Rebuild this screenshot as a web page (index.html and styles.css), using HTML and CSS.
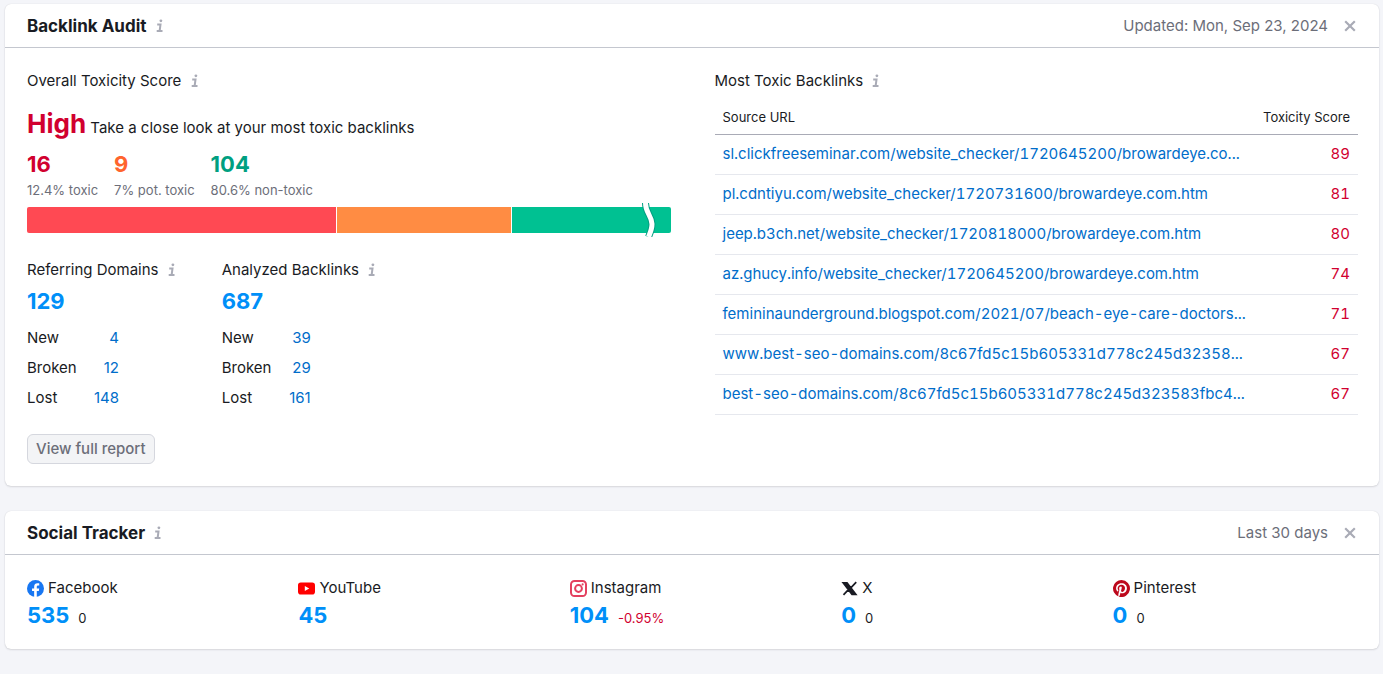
FILE: index.html
```html
<!DOCTYPE html>
<html lang="en">
<head>
<meta charset="utf-8">
<meta name="viewport" content="width=device-width, initial-scale=1.0">
<title>Backlink Audit</title>
<link rel="stylesheet" href="styles.css">
</head>
<body>

<svg class="defs" aria-hidden="true">
  <symbol id="info" viewBox="0 0 8 14">
    <circle cx="4.9" cy="1.8" r="1.4" fill="currentColor"/>
    <path d="M1.2 5.6H4.5L3.6 12M.7 12H6.500" fill="none" stroke="currentColor" stroke-width="2"/>
  </symbol>
  <symbol id="cross" viewBox="0 0 12 12">
    <path d="M1.2 1.2L10.8 10.8M10.8 1.2L1.2 10.8" fill="none" stroke="currentColor" stroke-width="2.2"/>
  </symbol>
</svg>

<section class="card">
  <div class="card-head">
    <h2>Backlink Audit</h2>
    <svg class="info"><use href="#info"/></svg>
    <span class="card-note">Updated: Mon, Sep 23, 2024</span>
    <button class="close" aria-label="Close"><svg><use href="#cross"/></svg></button>
  </div>
  <div class="audit">
    <div class="audit-left">
      <h3>Overall Toxicity Score <svg class="info"><use href="#info"/></svg></h3>
      <p class="score"><strong>High</strong> Take a close look at your most toxic backlinks</p>
      <div class="levels">
        <div class="level toxic"><b>16</b><span>12.4% toxic</span></div>
        <div class="level potential"><b>9</b><span>7% pot. toxic</span></div>
        <div class="level clean"><b>104</b><span>80.6% non-toxic</span></div>
      </div>
      <div class="bar">
        <div class="bar-toxic" style="width:48%"></div>
        <div class="bar-potential" style="width:27%"></div>
        <div class="bar-clean"></div>
        <svg class="bar-break" viewBox="0 0 16 34">
          <path d="M4.500 0C4.500 10 10.500 12 11 21C11 26 9.500 29 7.500 34" fill="none" stroke="#009f81" stroke-width="7"/>
          <path d="M4.500 0C4.500 10 10.500 12 11 21C11 26 9.500 29 7.500 34" fill="none" stroke="#fff" stroke-width="5"/>
        </svg>
      </div>
      <div class="counts">
        <div>
          <h3>Referring Domains <svg class="info"><use href="#info"/></svg></h3>
          <a class="total" href="#">129</a>
          <table class="changes">
            <tr><th>New</th><td><a href="#">4</a></td></tr>
            <tr><th>Broken</th><td><a href="#">12</a></td></tr>
            <tr><th>Lost</th><td><a href="#">148</a></td></tr>
          </table>
        </div>
        <div>
          <h3>Analyzed Backlinks <svg class="info"><use href="#info"/></svg></h3>
          <a class="total" href="#">687</a>
          <table class="changes changes-links">
            <tr><th>New</th><td><a href="#">39</a></td></tr>
            <tr><th>Broken</th><td><a href="#">29</a></td></tr>
            <tr><th>Lost</th><td><a href="#">161</a></td></tr>
          </table>
        </div>
      </div>
      <button class="report">View full report</button>
    </div>

    <div class="audit-right">
      <h3>Most Toxic Backlinks <svg class="info"><use href="#info"/></svg></h3>
      <table class="backlinks">
        <thead>
          <tr><th>Source URL</th><th>Toxicity Score</th></tr>
        </thead>
        <tbody>
          <tr><td><a href="#">sl.clickfreeseminar.com/website_checker/1720645200/browardeye.co...</a></td><td>89</td></tr>
          <tr><td><a href="#">pl.cdntiyu.com/website_checker/1720731600/browardeye.com.htm</a></td><td>81</td></tr>
          <tr><td><a href="#">jeep.b3ch.net/website_checker/1720818000/browardeye.com.htm</a></td><td>80</td></tr>
          <tr><td><a href="#">az.ghucy.info/website_checker/1720645200/browardeye.com.htm</a></td><td>74</td></tr>
          <tr><td><a href="#">femininaunderground.blogspot.com/2021/07/beach-eye-care-doctors...</a></td><td>71</td></tr>
          <tr><td><a href="#">www.best-seo-domains.com/8c67fd5c15b605331d778c245d32358...</a></td><td>67</td></tr>
          <tr><td><a href="#">best-seo-domains.com/8c67fd5c15b605331d778c245d323583fbc4...</a></td><td>67</td></tr>
        </tbody>
      </table>
    </div>
  </div>
</section>

<section class="card">
  <div class="card-head">
    <h2>Social Tracker</h2>
    <svg class="info"><use href="#info"/></svg>
    <span class="card-note">Last 30 days</span>
    <button class="close" aria-label="Close"><svg><use href="#cross"/></svg></button>
  </div>
  <div class="social">
    <div>
      <div class="network">
        <svg viewBox="0 0 24 24"><circle cx="12" cy="12" r="12" fill="#1877f2"/><path fill="#fff" d="M10.100 24v-8.400H7.100v-3.500h3V9.400c0-3 1.800-4.700 4.500-4.700 1.300 0 2.700.2 2.700.2v3h-1.500c-1.500 0-2 .9-2 1.900v2.300h3.400l-.5 3.500h-2.900V24z"/></svg>
        Facebook
      </div>
      <div class="fans"><a class="total" href="#">535</a><span>0</span></div>
    </div>
    <div>
      <div class="network">
        <svg viewBox="0 0 24 24"><rect y="3.500" width="24" height="17" rx="4" fill="#f00"/><path fill="#fff" d="M9.600 8.400v7.200l6.300-3.600z"/></svg>
        YouTube
      </div>
      <div class="fans"><a class="total" href="#">45</a></div>
    </div>
    <div>
      <div class="network">
        <svg viewBox="0 0 24 24"><g fill="none" stroke="#e4405f" stroke-width="2.800"><rect x="1.400" y="1.400" width="21.200" height="21.200" rx="5"/><circle cx="12" cy="12" r="4.800"/></g><circle cx="17.800" cy="6.200" r="1.500" fill="#e4405f"/></svg>
        Instagram
      </div>
      <div class="fans"><a class="total" href="#">104</a><span class="down">-0.95%</span></div>
    </div>
    <div>
      <div class="network">
        <svg viewBox="0 0 24 24"><path fill="none" stroke="#191b23" stroke-width="2.400" d="M3 4L15.500 20.500H21L8.500 4zM6 4.500L18 20M21.500 3L13.500 11.500M10.500 13.500L3.500 21"/></svg>
        X
      </div>
      <div class="fans"><a class="total" href="#">0</a><span>0</span></div>
    </div>
    <div>
      <div class="network">
        <svg viewBox="0 0 24 24"><path fill="#bd081c" d="M12 0a12 12 0 0 0-4.370 23.170c-.1-.95-.2-2.400.04-3.440l1.410-5.960s-.36-.72-.36-1.780c0-1.670.97-2.910 2.170-2.910 1.020 0 1.520.77 1.520 1.690 0 1.030-.65 2.570-.99 3.990-.29 1.190.6 2.170 1.770 2.170 2.130 0 3.770-2.250 3.770-5.490 0-2.870-2.060-4.870-5-4.870a5.190 5.190 0 0 0-5.410 5.200c0 1.030.39 2.130.89 2.740.1.120.11.220.08.340l-.33 1.360c-.05.220-.17.270-.4.160-1.500-.7-2.430-2.880-2.430-4.650 0-3.780 2.740-7.250 7.920-7.250 4.160 0 7.390 2.960 7.390 6.930 0 4.130-2.610 7.460-6.230 7.460-1.210 0-2.360-.63-2.750-1.380l-.75 2.850c-.27 1.040-1 2.350-1.490 3.150A12 12 0 1 0 12 0z"/></svg>
        Pinterest
      </div>
      <div class="fans"><a class="total" href="#">0</a><span>0</span></div>
    </div>
  </div>
</section>

</body>
</html>
```
FILE: styles.css
```css
* {box-sizing: border-box;}
body {margin: 0; padding: 4px 4px 0 5px; background: #f4f5f9; color: #191b23; font: 15px/22px Inter, "Liberation Sans", sans-serif;}
h2, h3, p {margin: 0;}
h2 {font-size: 17px; font-weight: 700;}
h3 {font-size: 15px; font-weight: 400;}
a {color: #006dca; text-decoration: none;}
button {font: inherit; cursor: pointer;}
table {border-collapse: collapse;}
.defs {display: none;}
.info {width: 8px; height: 14px; color: #a9abb6;}
h3 .info {margin-left: 5px; vertical-align: -2px;}

/* cards */
.card {margin-bottom: 25px; background: #fff; border-radius: 6px; box-shadow: 0 0 1px rgba(25, 27, 35, 0.16), 0 1px 2px rgba(25, 27, 35, 0.12);}
.card-head {display: flex; align-items: center; height: 44px; padding: 0 23px 0 22px; border-bottom: 1px solid #c4c7cf;}
.card-head .info {margin-left: 9px;}
.card-note {margin-left: auto; color: #6c6e79;}
.close {display: flex; margin-left: 16px; padding: 0; border: 0; background: none; color: #a9abb6;}
.close svg {width: 12px; height: 12px;}

/* backlink audit */
.audit {display: grid; grid-template-columns: 1fr 1fr; gap: 44px; padding: 22px 21px 22px 22px;}
.score {margin-top: 15px; line-height: 34px;}
.score strong {color: #d1002f; font-size: 26px;}
.levels {display: flex; gap: 16px; margin-top: 7px;}
.level b {display: block; font-size: 22px; line-height: 24px;}
.level span {display: block; margin-top: 5px; color: #6c6e79; font-size: 13px; line-height: 18px;}
.toxic b {color: #d1002f;}
.potential b {color: #ff642d;}
.clean b {color: #009f81;}
.bar {display: flex; gap: 1px; position: relative; height: 26px; margin-top: 8px;}
.bar-toxic {background: #ff4953; border-radius: 2px 0 0 2px;}
.bar-potential {background: #ff8c43;}
.bar-clean {flex: 1; background: #00c192; border-radius: 0 2px 2px 0;}
.bar-break {position: absolute; top: -4px; right: 14px; width: 16px; height: 34px;}
.counts {display: flex; gap: 46px; margin-top: 26px;}
.total {display: block; color: #008ff8; font-size: 22px; font-weight: 700; line-height: 28px;}
.counts .total {margin-top: 6px;}
.changes {margin-top: 8px; width: 92px;}
.changes-links {width: 89px;}
.changes th, .changes td {padding: 4px 0; font-weight: 400; text-align: left;}
.changes td {text-align: right;}
.report {height: 30px; margin-top: 21px; padding: 0 8px; border: 1px solid #d5d7de; border-radius: 6px; background: #f3f4f6; color: #6c6e79; font-weight: 500; line-height: 22px;}

/* toxic backlinks table */
.backlinks {width: 100%; margin-top: 9px;}
.backlinks th {padding: 5px 8px 6px; border-bottom: 1px solid #a9abb6; font-size: 13px; font-weight: 400; text-align: left;}
.backlinks td {padding: 8px 8px 9px; border-bottom: 1px solid #e6e8ee; font-variant-numeric: tabular-nums;}
.backlinks th:last-child, .backlinks td:last-child {text-align: right;}
.backlinks td:last-child {color: #d1002f;}

/* social tracker */
.social {display: grid; grid-template-columns: repeat(5, 1fr); gap: 26px; padding: 22px 21px 20px 22px;}
.network {display: flex; align-items: center; gap: 4px;}
.network svg {width: 17px; height: 17px;}
.fans {display: flex; align-items: baseline; gap: 9px; margin-top: 2px;}
.fans span {font-size: 13px;}
.fans .down {color: #d1002f;}
```
